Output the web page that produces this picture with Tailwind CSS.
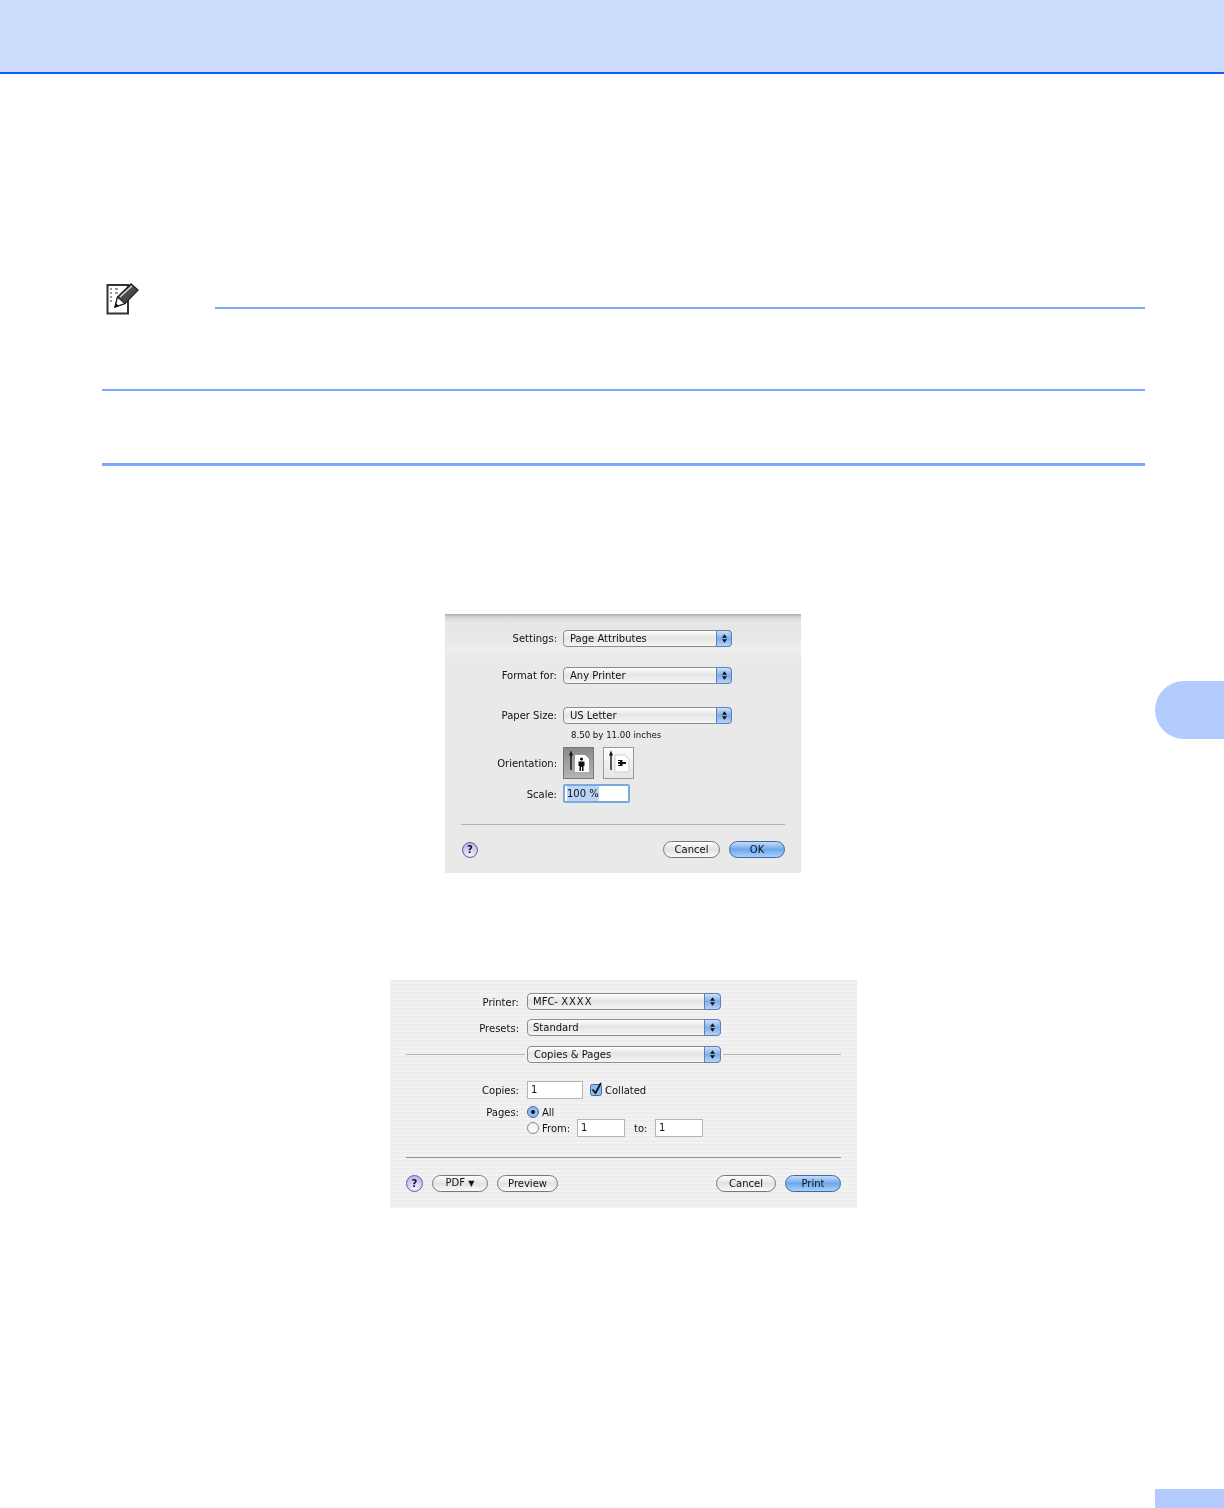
<!DOCTYPE html>
<html lang="en">

<head>
    <meta charset="UTF-8">
    <title>Page Setup</title>
    <script src="https://cdn.jsdelivr.net/npm/@tailwindcss/browser@4"></script>
</head>

<body class="relative bg-white h-[1508px] overflow-hidden font-['DejaVu_Sans',sans-serif] text-[10px] text-[#111]">
    <!-- Header band -->
    <header class="h-[74px] bg-[#cbdcfd] border-b-2 border-[#0a5cff]"></header>

    <!-- Chapter tab and page number block -->
    <div class="absolute right-0 top-[681px] w-[69px] h-[58px] bg-[#b3ccfd] rounded-l-[29px]"></div>
    <div class="absolute right-0 top-[1489px] w-[69px] h-[19px] bg-[#b3ccfd]"></div>

    <main class="ml-[102px] w-[1043px]">
        <!-- Note -->
        <div class="flex items-start h-[235px] pt-[209px]">
            <svg class="w-[36px] h-[34px] ml-[3px] shrink-0" viewBox="0 0 36 34" fill="none">
                <path d="M2.500 2H23V30.500H2.500Z" fill="#fff" stroke="#333" stroke-width="2" />
                <path d="M5 6h2M5 10h2M5 14h2M5 18h2M10 6h3M10 10h3" stroke="#999" stroke-width="2" />
                <path d="M10 24L12.500 14L26 1L33 7L20 20.500Z" fill="#4a4a4a" stroke="#222" stroke-width="1.300" />
                <path d="M15 14L27 3" stroke="#ddd" stroke-width="1.300" />
                <path d="M10 24L12.500 14L20 20.500Z" fill="#fff" stroke="#222" stroke-width="1.200" />
                <path d="M10 24L10.900 20.300L14 22.900Z" fill="#111" />
            </svg>
            <div class="ml-[74px] mt-[24px] flex-1 h-[2px] bg-[#7fa7ff]"></div>
        </div>
        <div class="mt-[80px] h-[2px] bg-[#7fa7ff]"></div>
        <div class="mt-[72px] h-[3px] bg-[#7fa7ff]"></div>

        <!-- Page Attributes dialog -->
        <section class="relative mt-[148px] ml-[343px] w-[356px] h-[259px] blur-[0.35px] bg-[linear-gradient(#a9a9a9_0,#d6d6d6_3px,#e6e6e6_8px,#e9e9e9_28px,#eeeeee_36px,#e9e9e9_44px)] pt-[16px]">
            <div class="flex items-center h-[17px]">
                <label class="w-[112px] text-right">Settings:</label>
                <div class="relative ml-[6px] w-[169px] h-[17px] rounded-[4px] border border-[#8c8c8c] bg-[linear-gradient(#fff,#e4e4e4_45%,#f5f5f5)] pl-[6px] leading-[15px]">Page Attributes
                    <div class="absolute right-[-1px] top-[-1px] w-[16px] h-[17px] rounded-r-[4px] border border-[#5b83b8] bg-[linear-gradient(#cfe0f7,#7fadea_50%,#b9d3f5)] flex items-center justify-center">
                        <svg class="w-[5px] h-[9px]" viewBox="0 0 6 10"><path d="M3 0L6 4H0ZM0 6H6L3 10Z" fill="#111" /></svg>
                    </div>
                </div>
            </div>
            <div class="flex items-center h-[17px] mt-[20px]">
                <label class="w-[112px] text-right">Format for:</label>
                <div class="relative ml-[6px] w-[169px] h-[17px] rounded-[4px] border border-[#8c8c8c] bg-[linear-gradient(#fff,#e4e4e4_45%,#f5f5f5)] pl-[6px] leading-[15px]">Any Printer
                    <div class="absolute right-[-1px] top-[-1px] w-[16px] h-[17px] rounded-r-[4px] border border-[#5b83b8] bg-[linear-gradient(#cfe0f7,#7fadea_50%,#b9d3f5)] flex items-center justify-center">
                        <svg class="w-[5px] h-[9px]" viewBox="0 0 6 10"><path d="M3 0L6 4H0ZM0 6H6L3 10Z" fill="#111" /></svg>
                    </div>
                </div>
            </div>
            <div class="flex items-center h-[17px] mt-[23px]">
                <label class="w-[112px] text-right">Paper Size:</label>
                <div class="relative ml-[6px] w-[169px] h-[17px] rounded-[4px] border border-[#8c8c8c] bg-[linear-gradient(#fff,#e4e4e4_45%,#f5f5f5)] pl-[6px] leading-[15px]">US Letter
                    <div class="absolute right-[-1px] top-[-1px] w-[16px] h-[17px] rounded-r-[4px] border border-[#5b83b8] bg-[linear-gradient(#cfe0f7,#7fadea_50%,#b9d3f5)] flex items-center justify-center">
                        <svg class="w-[5px] h-[9px]" viewBox="0 0 6 10"><path d="M3 0L6 4H0ZM0 6H6L3 10Z" fill="#111" /></svg>
                    </div>
                </div>
            </div>
            <div class="mt-[5px] ml-[126px] h-[12px] leading-[13px] text-[8.6px]">8.50 by 11.00 inches</div>
            <div class="flex items-center h-[32px] mt-[6px]">
                <label class="w-[112px] text-right pt-[1px]">Orientation:</label>
                <div class="ml-[6px] w-[31px] h-[32px] border border-[#777] bg-[linear-gradient(#8a8a8a,#b5b5b5)]">
                    <svg class="w-[29px] h-[30px]" viewBox="0 0 29 30">
                        <path d="M7 6V22" stroke="#111" stroke-width="1.400" />
                        <path d="M7 2.500L9 7.500H5Z" fill="#111" />
                        <path d="M11 7H21L25 11V24H11Z" fill="#fff" />
                        <circle cx="17.500" cy="11" r="1.600" fill="#111" />
                        <path d="M14.500 13.500H20.500V18H19.500V23H18V19H17V23H15.500V18H14.500Z" fill="#111" />
                    </svg>
                </div>
                <div class="ml-[9px] w-[31px] h-[32px] border border-[#999] bg-[linear-gradient(#fbfbfb,#e6e6e6)]">
                    <svg class="w-[29px] h-[30px]" viewBox="0 0 29 30">
                        <path d="M7 6V22" stroke="#111" stroke-width="1.400" />
                        <path d="M7 2.500L9 7.500H5Z" fill="#111" />
                        <path d="M11 7H21L25 11V24H11Z" fill="#fff" stroke="#bbb" stroke-width="0.700" />
                        <path d="M14 12H18.500V18H14V17H16V16H14V14H16V13H14ZM18.500 14H22V16H18.500Z" fill="#111" />
                    </svg>
                </div>
            </div>
            <div class="flex items-center h-[19px] mt-[5px]">
                <label class="w-[112px] text-right pt-[1px]">Scale:</label>
                <div class="ml-[6px] w-[67px] h-[19px] rounded-[2px] border-2 border-[#7aa9dd] bg-white pl-[2px] leading-[15px]"><span class="inline-block h-[15px] bg-[#bcd5f5]">100 %</span></div>
            </div>
            <div class="mt-[21px] mx-[16px] h-px bg-[#b5b5b5]"></div>
            <div class="flex items-center h-[17px] mt-[16px] pl-[17px] pr-[16px]">
                <div class="w-[16px] h-[16px] rounded-full border border-[#6a5a9c] bg-[radial-gradient(circle_at_50%_85%,#f5f0ff,#b9a4ec)] text-[10px] font-bold leading-[14px] text-center">?</div>
                <button class="ml-auto w-[57px] h-[17px] rounded-full border border-[#777] bg-[linear-gradient(#fff,#e2e2e2_50%,#fafafa)] leading-[14px] text-center">Cancel</button>
                <button class="ml-[9px] w-[56px] h-[17px] rounded-full border border-[#3e6aa8] bg-[linear-gradient(#c5dcf8,#6ea8ec_50%,#a9d0f8)] leading-[14px] text-center">OK</button>
            </div>
        </section>

        <!-- Print dialog -->
        <section class="relative mt-[107px] mx-auto w-[467px] h-[228px] blur-[0.35px] bg-[repeating-linear-gradient(#ededed_0,#ededed_2px,#f2f2f2_2px,#f2f2f2_4px)] pt-[13px]">
            <div class="flex items-center h-[17px]">
                <label class="w-[129px] text-right pt-[2px]">Printer:</label>
                <div class="relative ml-[8px] w-[194px] h-[17px] rounded-[4px] border border-[#8c8c8c] bg-[linear-gradient(#fff,#e4e4e4_45%,#f5f5f5)] pl-[5px] leading-[15px]">MFC- <span class="tracking-[1px]">XXXX</span>
                    <div class="absolute right-[-1px] top-[-1px] w-[17px] h-[17px] rounded-r-[4px] border border-[#5b83b8] bg-[linear-gradient(#cfe0f7,#7fadea_50%,#b9d3f5)] flex items-center justify-center">
                        <svg class="w-[5px] h-[9px]" viewBox="0 0 6 10"><path d="M3 0L6 4H0ZM0 6H6L3 10Z" fill="#111" /></svg>
                    </div>
                </div>
            </div>
            <div class="flex items-center h-[17px] mt-[9px]">
                <label class="w-[129px] text-right pt-[2px]">Presets:</label>
                <div class="relative ml-[8px] w-[194px] h-[17px] rounded-[4px] border border-[#8c8c8c] bg-[linear-gradient(#fff,#e4e4e4_45%,#f5f5f5)] pl-[5px] leading-[15px]">Standard
                    <div class="absolute right-[-1px] top-[-1px] w-[17px] h-[17px] rounded-r-[4px] border border-[#5b83b8] bg-[linear-gradient(#cfe0f7,#7fadea_50%,#b9d3f5)] flex items-center justify-center">
                        <svg class="w-[5px] h-[9px]" viewBox="0 0 6 10"><path d="M3 0L6 4H0ZM0 6H6L3 10Z" fill="#111" /></svg>
                    </div>
                </div>
            </div>
            <div class="flex items-center h-[17px] mt-[10px] px-[16px]">
                <div class="w-[119px] h-px bg-[#b5b5b5]"></div>
                <div class="relative ml-[2px] w-[194px] h-[17px] shrink-0 rounded-[4px] border border-[#8c8c8c] bg-[linear-gradient(#fff,#e4e4e4_45%,#f5f5f5)] pl-[6px] leading-[15px]">Copies &amp; Pages
                    <div class="absolute right-[-1px] top-[-1px] w-[17px] h-[17px] rounded-r-[4px] border border-[#5b83b8] bg-[linear-gradient(#cfe0f7,#7fadea_50%,#b9d3f5)] flex items-center justify-center">
                        <svg class="w-[5px] h-[9px]" viewBox="0 0 6 10"><path d="M3 0L6 4H0ZM0 6H6L3 10Z" fill="#111" /></svg>
                    </div>
                </div>
                <div class="ml-[2px] flex-1 h-px bg-[#b5b5b5]"></div>
            </div>
            <div class="flex items-center h-[18px] mt-[18px]">
                <label class="w-[129px] text-right pt-[1px]">Copies:</label>
                <div class="ml-[8px] w-[56px] h-[18px] border border-[#b5b5b5] bg-white pl-[3px] leading-[16px]">1</div>
                <svg class="ml-[7px] w-[12px] h-[14px] mb-[2px]" viewBox="0 0 12 14">
                    <rect x="0.500" y="2.500" width="11" height="11" rx="2" fill="#8fbbf0" stroke="#3e6aa8" />
                    <path d="M2.500 7.500L5.500 11L11 1" fill="none" stroke="#111" stroke-width="1.800" />
                </svg>
                <span class="ml-[3px] pt-[1px]">Collated</span>
            </div>
            <div class="flex items-center h-[14px] mt-[6px]">
                <label class="w-[129px] text-right">Pages:</label>
                <div class="ml-[8px] w-[12px] h-[12px] rounded-full border border-[#3e6aa8] bg-[#8fbbf0] flex items-center justify-center">
                    <div class="w-[4px] h-[4px] rounded-full bg-[#111]"></div>
                </div>
                <span class="ml-[3px]">All</span>
            </div>
            <div class="flex items-center h-[18px] ml-[137px]">
                <div class="w-[12px] h-[12px] rounded-full border border-[#888] bg-[linear-gradient(#eee,#fff)]"></div>
                <span class="ml-[3px] w-[35px]">From:</span>
                <div class="w-[48px] h-[18px] border border-[#b5b5b5] bg-white pl-[3px] leading-[16px]">1</div>
                <span class="ml-[9px] w-[21px]">to:</span>
                <div class="w-[48px] h-[18px] border border-[#b5b5b5] bg-white pl-[3px] leading-[16px]">1</div>
            </div>
            <div class="mt-[20px] mx-[16px] h-px bg-[#8e8e8e]"></div>
            <div class="flex items-center h-[17px] mt-[17px] pl-[16px] pr-[16px]">
                <div class="w-[17px] h-[17px] rounded-full border border-[#6a5a9c] bg-[radial-gradient(circle_at_50%_85%,#f5f0ff,#b9a4ec)] text-[10px] font-bold leading-[15px] text-center">?</div>
                <button class="ml-[9px] w-[56px] h-[17px] rounded-full border border-[#777] bg-[linear-gradient(#fff,#e2e2e2_50%,#fafafa)] leading-[14px] text-center">PDF <span class="text-[8px]">▼</span></button>
                <button class="ml-[9px] w-[61px] h-[17px] rounded-full border border-[#777] bg-[linear-gradient(#fff,#e2e2e2_50%,#fafafa)] leading-[14px] text-center">Preview</button>
                <button class="ml-auto w-[60px] h-[17px] rounded-full border border-[#777] bg-[linear-gradient(#fff,#e2e2e2_50%,#fafafa)] leading-[14px] text-center">Cancel</button>
                <button class="ml-[9px] w-[56px] h-[17px] rounded-full border border-[#3e6aa8] bg-[linear-gradient(#c5dcf8,#6ea8ec_50%,#a9d0f8)] leading-[14px] text-center">Print</button>
            </div>
        </section>
    </main>
</body>

</html>
